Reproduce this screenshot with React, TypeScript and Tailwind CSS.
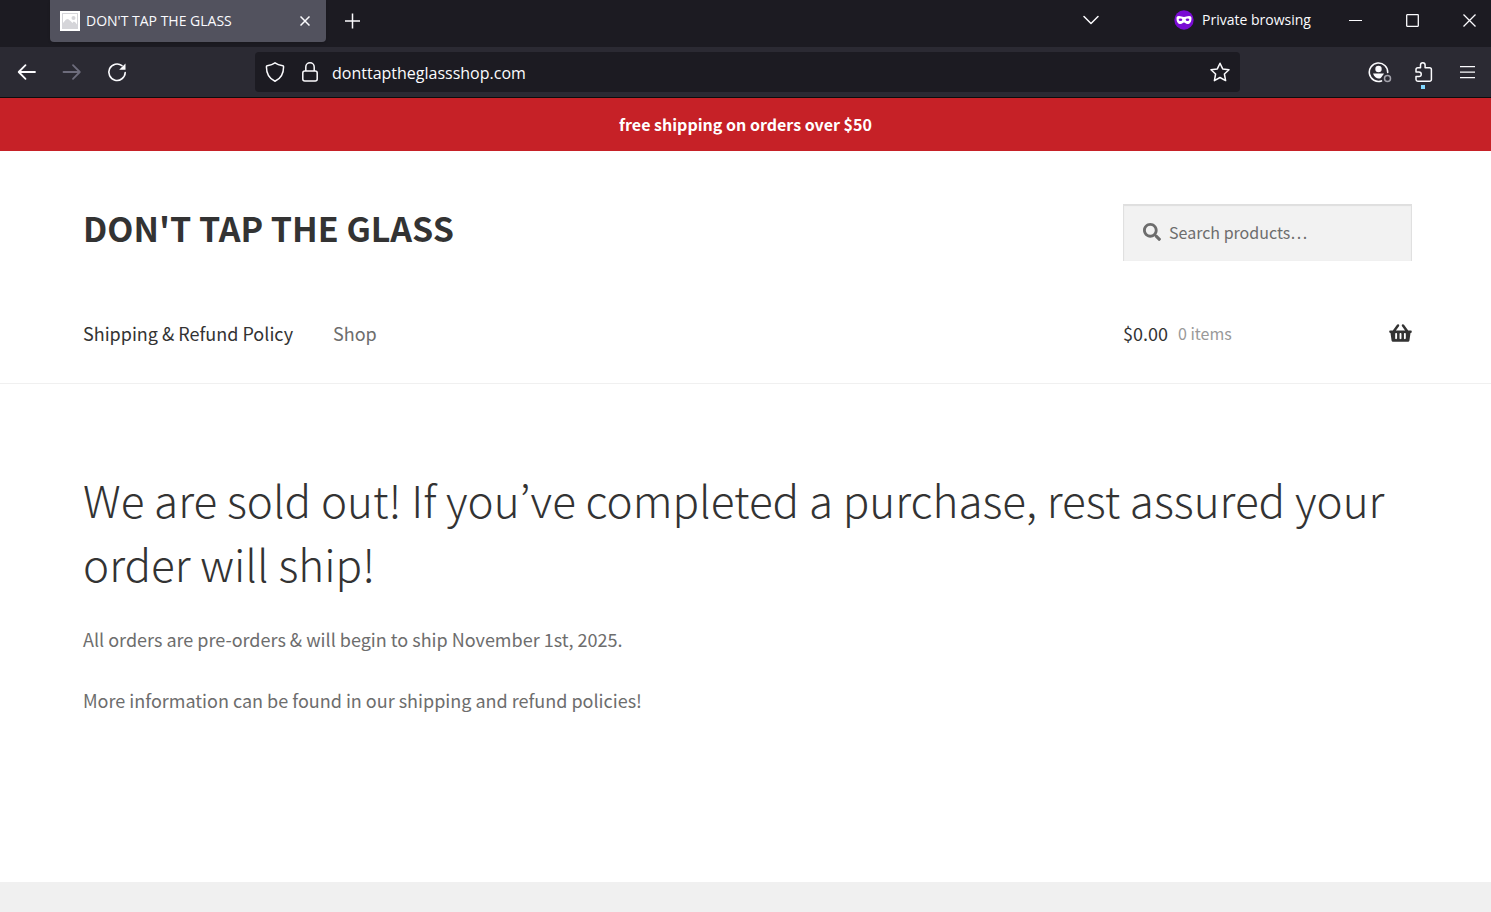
import { FaSearch, FaShoppingBasket } from "react-icons/fa";

const TabBar = () => {
  return (
    <div className="flex h-[47px] items-start bg-[#1c1b22] pl-[50px]">
      <div className="flex h-[42px] w-[276px] items-center rounded-b bg-[#52525e] pr-3 pb-px pl-[10px] shadow">
        <svg viewBox="0 0 20 20" className="mr-[6px] size-5 shrink-0">
          <rect width="20" height="20" fill="#fff" />
          <rect x="2" y="2" width="16" height="16" fill="#d5d5d9" />
          <path d="M3 3h14v10.500l-2-2.500-1.500-.5-1 1.500-2-2L8 8 6 8.500 3 12z" fill="#fff" />
          <circle cx="13.500" cy="7" r="2" fill="#d5d5d9" />
        </svg>
        <span className="grow text-[14px] leading-5 whitespace-nowrap">DON'T TAP THE GLASS</span>
        <button aria-label="Close tab" className="flex size-[18px] items-center justify-center">
          <svg viewBox="0 0 10 10" className="size-[10px]" fill="none" stroke="currentColor" strokeWidth="1.5">
            <path d="M.5.5l9 9M9.500.5l-9 9" />
          </svg>
        </button>
      </div>
      <button aria-label="New tab" className="flex h-[41px] w-[53px] items-center justify-center">
        <svg viewBox="0 0 16 16" className="size-4" fill="none" stroke="currentColor" strokeWidth="1.5">
          <path d="M7.500 .5v15M0 8h15" />
        </svg>
      </button>
      <div className="ml-auto flex h-10 items-center">
        <button aria-label="List all tabs" className="mr-[75px]">
          <svg viewBox="0 0 16 10" className="h-[10px] w-4" fill="none" stroke="currentColor" strokeWidth="1.5" strokeLinecap="round" strokeLinejoin="round">
            <path d="M1 1.500l7 7 7-7" />
          </svg>
        </button>
        <svg viewBox="0 0 20 20" className="mr-2 size-5">
          <circle cx="10" cy="10" r="9.700" fill="#7a0bd4" />
          <path
            d="M2.500 8.200c0-1.300.8-2.200 2.300-2.200 2.400 0 3.400 1 5.200 1s2.800-1 5.200-1c1.500 0 2.300.9 2.300 2.200 0 3.600-1.600 5.800-4 5.800-1.800 0-2.300-1.400-3.500-1.400S8.300 14 6.500 14c-2.400 0-4-2.200-4-5.800z"
            fill="#fff"
          />
          <ellipse cx="6.500" cy="9.800" rx="1.800" ry="1.200" fill="#7a0bd4" />
          <ellipse cx="13.500" cy="9.800" rx="1.800" ry="1.200" fill="#7a0bd4" />
        </svg>
        <span className="w-[111px] text-[14px] leading-5 whitespace-nowrap">Private browsing</span>
        <button aria-label="Minimize" className="flex w-[57px] items-center justify-center pl-[28px]">
          <svg viewBox="0 0 13 13" className="size-[13px]" stroke="currentColor">
            <path d="M0 6.500h13" />
          </svg>
        </button>
        <button aria-label="Maximize" className="flex w-[57px] items-center justify-center pl-[28px]">
          <svg viewBox="0 0 13 13" className="size-[13px]" fill="none" stroke="currentColor" strokeWidth="1.300">
            <rect x=".7" y=".7" width="11.600" height="11.600" rx=".5" />
          </svg>
        </button>
        <button aria-label="Close window" className="flex w-[64px] items-center justify-center pl-5">
          <svg viewBox="0 0 13 13" className="size-[13px]" fill="none" stroke="currentColor" strokeWidth="1.300">
            <path d="M.5.5l12 12M12.500.5l-12 12" />
          </svg>
        </button>
      </div>
    </div>
  );
};

const Toolbar = () => {
  return (
    <div className="flex h-[51px] items-center border-b border-[#0c0c0d] bg-[#2b2a33] pr-4 pl-[17px]">
      <div className="flex w-[238px] shrink-0 items-center gap-[25px]">
        <button aria-label="Back">
          <svg viewBox="0 0 20 20" className="size-5" fill="none" stroke="currentColor" strokeWidth="1.800" strokeLinecap="round" strokeLinejoin="round">
            <path d="M18 10H2.500M8.500 3.200L1.700 10l6.800 6.800" />
          </svg>
        </button>
        <button aria-label="Forward" className="text-[#6d6c7c]">
          <svg viewBox="0 0 20 20" className="size-5" fill="none" stroke="currentColor" strokeWidth="1.800" strokeLinecap="round" strokeLinejoin="round">
            <path d="M1.500 10H17M11 3.200l6.800 6.800-6.800 6.800" />
          </svg>
        </button>
        <button aria-label="Reload">
          <svg viewBox="0 0 20 20" className="size-5" fill="none" stroke="currentColor" strokeWidth="1.600" strokeLinecap="round">
            <path d="M18.200 10.500A8.200 8.200 0 1 1 15 3.700" />
            <path d="M18.500 1.500v6.300h-6.300z" fill="currentColor" stroke="none" />
          </svg>
        </button>
      </div>
      <div className="flex h-10 w-[985px] shrink items-center rounded bg-[#1c1b22] px-[10px]">
        <svg viewBox="0 0 20 20" className="mr-[15px] size-5 shrink-0" fill="none" stroke="currentColor" strokeWidth="1.500" strokeLinejoin="round">
          <path d="M10 .8c2 1.500 4.800 2.400 7.800 2.900.5.100.8.500.8 1C18.600 12 15 17 10 19.200 5 17 1.400 12 1.400 4.700c0-.5.300-.9.800-1C5.200 3.200 8 2.300 10 .8z" />
        </svg>
        <svg viewBox="0 0 20 20" className="mr-3 size-5 shrink-0" fill="none" stroke="currentColor" strokeWidth="1.500">
          <rect x="2.800" y="9" width="14.400" height="10" rx="2" />
          <path d="M5.800 9V5a4.200 4.200 0 0 1 8.400 0v4" />
        </svg>
        <input aria-label="Address" defaultValue="donttaptheglassshop.com" className="min-w-0 grow pt-[2px] text-[16px] leading-6 outline-none" />
        <button aria-label="Bookmark this page">
          <svg viewBox="0 0 20 20" className="size-5" fill="none" stroke="currentColor" strokeWidth="1.500" strokeLinejoin="round">
            <path d="M10 1.200l2.700 5.700 6.300.8-4.600 4.300 1.200 6.600L10 15.500l-5.600 3.100L5.600 12 1 7.700l6.300-.8z" />
          </svg>
        </button>
      </div>
      <div className="ml-auto flex items-center">
        <button aria-label="Account" className="mr-[22px]">
          <svg viewBox="0 0 24 22" className="h-[22px] w-6" fill="none" stroke="currentColor" strokeWidth="1.600">
            <path d="M13.500 19.900A9.200 9.200 0 1 1 19.700 11.500" strokeLinecap="round" />
            <circle cx="10.500" cy="8" r="3.200" fill="currentColor" stroke="none" />
            <path d="M5 12.500h11l-1 1.500c-1 1-1 2-2.500 3.200-3 1-6-.7-7.500-4.700z" fill="currentColor" stroke="none" />
            <circle cx="19.500" cy="17.500" r="3" stroke="#a3a2ab" strokeWidth="1.500" />
          </svg>
        </button>
        <button aria-label="Extensions" className="relative mr-[26px]">
          <svg viewBox="0 0 20 20" className="size-5" fill="none" stroke="currentColor" strokeWidth="1.500" strokeLinejoin="round">
            <path d="M2 17.500V14.500h3a2.200 2.200 0 0 0 0-4.500H2V7.500A1.800 1.800 0 0 1 3.800 5.700H6.500V3.100a2.300 2.300 0 0 1 4.600 0v2.600h4.500a1.800 1.800 0 0 1 1.800 1.800v9.900a1.800 1.800 0 0 1-1.800 1.800H3.800A1.800 1.800 0 0 1 2 17.500z" />
          </svg>
          <span className="absolute -bottom-[7px] left-[7px] size-1 bg-[#80d8ff]" />
        </button>
        <button aria-label="Menu">
          <svg viewBox="0 0 15 13" className="h-[13px] w-[15px]" stroke="currentColor" strokeWidth="1.300">
            <path d="M0 .7h15M0 6.200h15M0 11.700h15" />
          </svg>
        </button>
      </div>
    </div>
  );
};

const SiteHeader = () => {
  return (
    <header className="border-b border-[#f0f0f0] pt-[53px] pr-[79px] pb-[35px] pl-[83px]">
      <div className="flex items-start justify-between">
        <a href="#" className="text-[34px] leading-[48px] font-bold text-[#333333]">
          DON'T TAP THE GLASS
        </a>
        <label className="flex h-[57px] w-[289px] items-center gap-2 bg-[#f2f2f2] px-5 pb-[2px] text-[#6d6d6d] inset-shadow-[0_1px_1px_1px_rgba(0,0,0,0.08)]">
          <FaSearch className="size-[18px]" />
          <input type="search" aria-label="Search products" placeholder="Search products…" className="min-w-0 grow text-[16px] leading-6 outline-none placeholder:text-[#6d6d6d]" />
        </label>
      </div>
      <div className="mt-[57px] flex items-center justify-between text-[18px] leading-[30px]">
        <nav className="flex gap-10">
          <a href="#shipping" className="text-[#333333]">
            Shipping &amp; Refund Policy
          </a>
          <a href="#shop" className="text-[#6d6d6d]">
            Shop
          </a>
        </nav>
        <a href="#cart" className="flex w-[289px] items-center text-[#333333]">
          $0.00
          <span className="ml-[10px] text-[16px] text-[#999999]">0 items</span>
          <FaShoppingBasket className="ml-auto h-5 w-[23px]" />
        </a>
      </div>
    </header>
  );
};

const App = () => {
  return (
    <div className="flex min-h-screen flex-col bg-white font-['Noto_Sans_CJK_KR','Noto_Sans',sans-serif]">
      <div className="font-['Open_Sans','Noto_Sans',sans-serif] text-[#fbfbfe]">
        <TabBar />
        <Toolbar />
      </div>
      <div className="bg-[#c62127] py-[14px] text-center text-[16px] leading-[25px] font-bold text-white">
        free shipping on orders over $50
      </div>
      <SiteHeader />
      <main className="pt-[83px] pr-[79px] pb-[166px] pl-[83px] text-[18px] leading-[31px] text-[#6d6d6d]">
        <h1 className="mb-[29px] text-[44px] leading-[64px] font-light text-[#333333]">
          We are sold out! If you’ve completed a purchase, rest assured your order will ship!
        </h1>
        <p className="mb-[30px]">All orders are pre-orders &amp; will begin to ship November 1st, 2025.</p>
        <p>More information can be found in our shipping and refund policies!</p>
      </main>
      <footer className="min-h-[30px] grow bg-[#f0f0f0]" />
    </div>
  );
};

export default App;
